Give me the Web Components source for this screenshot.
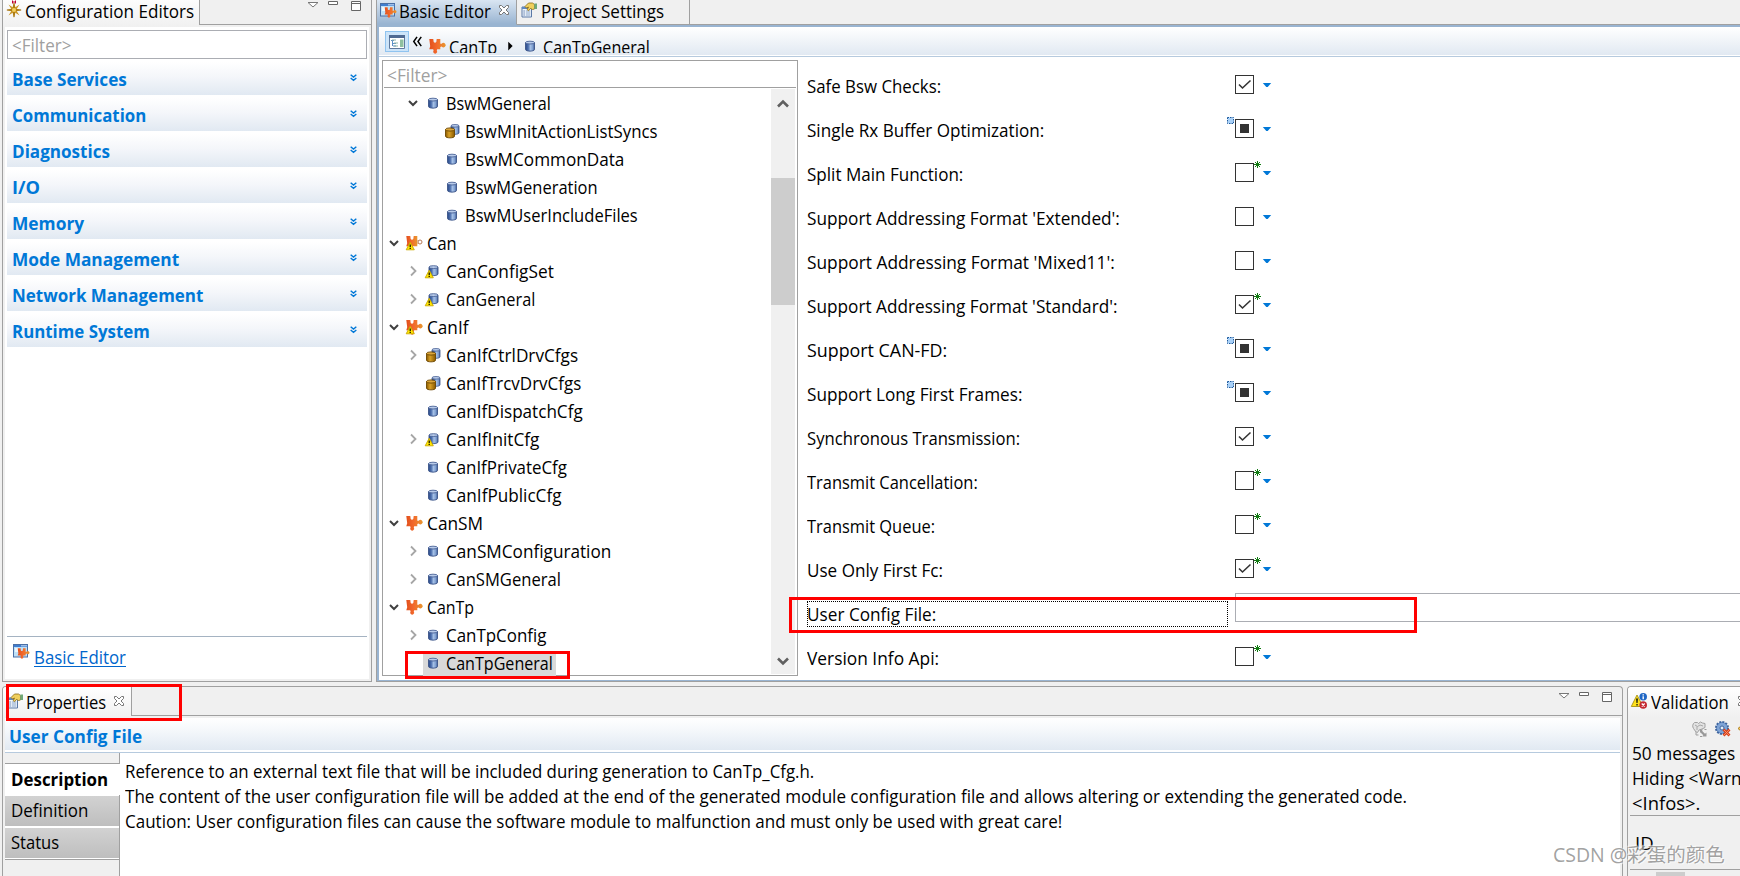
<!DOCTYPE html>
<html lang="en">
<head>
<meta charset="utf-8">
<title>Configurator</title>
<style>
    html, body {
        margin: 0;
        height: 876px;
        overflow: hidden;
    }
    body {
        background: #f0f0f0;
        color: #000;
        font: 17.6px/24px "Open Sans", "Noto Sans", "Noto Sans CJK SC", sans-serif;
    }
</style>
</head>
<body>
<config-app></config-app>

<script>
const PUZZLE = `<path d="M.3 1h4l.4 3c.8 1 1.800 1 2.600 0l.4-3h3.600v4.800h1.400a2.200 2.200 0 1 1 0 2.600l-1.400.6v2.200H8.200l-.4 1.200a2 2 0 1 1-3.200 0l-.4-1.200H.3l.9-3z" fill="url(#o)"/>`;
const ORANGE = `<defs><linearGradient id="o"><stop offset="0" stop-color="#e2501c"/><stop offset=".45" stop-color="#f2692c"/><stop offset="1" stop-color="#e8962e"/></linearGradient></defs>`;
const BLUE = `<defs><linearGradient id="b"><stop offset="0" stop-color="#2b4a87"/><stop offset=".3" stop-color="#4c6fae"/><stop offset=".55" stop-color="#a5c0e6"/><stop offset=".8" stop-color="#7f9fd0"/><stop offset="1" stop-color="#3d5a94"/></linearGradient><linearGradient id="g"><stop offset="0" stop-color="#8a5a00"/><stop offset=".4" stop-color="#d9a126"/><stop offset="1" stop-color="#8a5a00"/></linearGradient></defs>`;
const CYL = `<path d="M3.500 4.600v6.800c0 2.300 9 2.300 9 0V4.600z" fill="url(#b)" stroke="#3b5488" stroke-width=".9"/><ellipse cx="8" cy="4.600" rx="4.500" ry="1.400" fill="#b8cbea" stroke="#4a6296" stroke-width=".9"/>`;
const WARN = `<path d="M4.200 7.200 8.300 14.800H.2z" fill="#ffe600" stroke="#c9a800" stroke-width=".9"/><path d="M3.500 9.600h1.500v2.500H3.500zM3.500 12.800h1.500v1.200H3.500z" fill="#3a3000"/>`;

const ICONS = {
    puzzle: ORANGE + PUZZLE,
    puzzlewarn: ORANGE + PUZZLE + WARN,
    puzzleopen: ORANGE + `<path d="M.3 1h4l.4 3c.8 1 1.800 1 2.600 0l.4-3h3.600v10.200H.3l.9-3z" fill="url(#o)"/><path d="M11.500 5.800l1.300.2M11.500 8.200l1.300-.2" stroke="#c07848"/><circle cx="14" cy="7" r="2" fill="#fff" stroke="#b87a56"/>` + WARN,
    cyl: BLUE + CYL,
    cylwarn: BLUE + `<g transform="translate(.5 -.5)">${CYL}</g>` + WARN,
    cyls: BLUE + `<path d="M7 2.800v7c0 2 8 2 8 0v-7z" fill="url(#b)" stroke="#3b5488" stroke-width=".8"/><ellipse cx="11" cy="2.800" rx="4" ry="1.300" fill="#b8cbea" stroke="#4a6296" stroke-width=".8"/><path d="M1.500 6.500v6.700c0 2.200 9 2.200 9 0V6.500z" fill="url(#g)" stroke="#6b4600" stroke-width=".9"/><ellipse cx="6" cy="6.500" rx="4.500" ry="1.600" fill="#dca63a" stroke="#6b4600" stroke-width=".9"/>`,
    basic: ORANGE + `<rect x=".5" y="1.500" width="14" height="12.500" fill="#bfe0f7" stroke="#4a6fa5"/><path d="M1 2h13.500v2H1z" fill="#3f7ed0"/><path d="M8.500 2h1v1.500h-1zM10.500 2h1v1.500h-1zM12.500 2h1v1.500h-1z" fill="#fff"/><path d="M2 5h5v4H2z" fill="#e9f6ff"/><g transform="translate(4.500 4.500) scale(.72)">${PUZZLE}</g>`,
    props: `<path d="M1 5h9.500v10H1z" fill="#eef4fb" stroke="#5a78a6"/><path d="M1 5h9.500v2H1z" fill="#5f88c2"/><path d="M2.500 9h1.200M2.500 11h1.200M2.500 13h1.200" stroke="#3a5d9a"/><path d="M4.800 9h4.500M4.800 11h4.500M4.800 13h4.500" stroke="#8aa4c8"/><path d="M4 4.500 7.500 1h4l2 1.500V7l-2 .5-2-1-2 2.200-1.300-1L7.500 5 5.500 6z" fill="#f0cf5c" stroke="#8a6a16" stroke-width=".8"/><path d="M13.300 1.500H16V7h-2.700z" fill="#6fa878"/>`,
    star: `<g transform="translate(0 1)"><path d="M8 0 9.400 5.300 13.500 2.600 10.800 6.700 16 8l-5.200 1.300 2.700 4.100-4.100-2.700L8 16 6.600 10.700 2.500 13.400 5.200 9.300 0 8l5.200-1.300L2.500 2.600l4.100 2.700z" fill="#c89420"/><path d="M8 1v14M1 8h14" stroke="#8a5a00" stroke-width=".8"/><circle cx="8" cy="8" r="2" fill="#f4d060"/></g><path d="M6.500-.5v3M9.500-.5v3M6.500 1h3" stroke="#c00030"/>`,
    nav: `<path d="M.5 1.500h15v13H.5z" fill="#fff" stroke="#5f7a9e"/><path d="M0 1h16v3H0z" fill="#4f6a92"/><path d="M11 5.500h3.500V13H11z" fill="#8fc0a0"/><path d="M2 6.500h3M3.500 7v5M4 9.500h3M4 12h3" stroke="#5c90c8"/><path d="M5 9h4M5 12h4M3 6h4" stroke="#8fb6a8"/>`,
    validation: `<path d="M6 2 12 13.500H.3z" fill="#ffe119" stroke="#b09a20"/><path d="M5 5.500h2L6.600 10H5.400zM5.300 11h1.500v1.500H5.300z" fill="#2c2c10"/><circle cx="12.200" cy="3.800" r="3.800" fill="#1f66c4"/><path d="M12.200 1.200v1.300M12.200 3.300v3" stroke="#fff" stroke-width="1.400"/><circle cx="12.200" cy="12" r="3.800" fill="#c42a32"/><path d="m10.700 10.500 3 3m0-3-3 3" stroke="#fff" stroke-width="1.300"/>`,
    graybulb: `<g fill="#e2e2e2" stroke="#a0a0a0"><path d="M4 11 1.500 7.500C.2 5.500.500 3 2.500 1.500h3l1 1 2-1.500 2 1 2.500.5v4L10 8l-3 1-1.500 2.500z"/><path d="M4 11v3h2.500"/></g><path d="M3 4l2.500 1.500L8 4l3 1M5 5.500V9" stroke="#a8a8a8" fill="none"/><path d="M8 8.500h3l-1 1.200 3 3 1.500-1.200v4h-4.500l1.300-1.300-3-3L8 12.500z" fill="#999"/><path d="M8 15.500h2M14.500 8.500h-2" stroke="#999"/>`,
    gearx: `<circle cx="7" cy="7" r="6" fill="#6f97cc" stroke="#3f659f" stroke-width="2" stroke-dasharray="2 1.100"/><circle cx="7" cy="7" r="5" fill="#7fa4d6"/><circle cx="7" cy="7" r="2" fill="#e8f0fa" stroke="#3f659f"/><path d="m8.500 8.500 6 6m0-6-6 6" stroke="#d8401c" stroke-width="2.800"/><path d="m9 9 5 5m0-5-5 5" stroke="#ff9a70" stroke-width=".8"/>`,
    arrow: `<path d="M0 7.500 6 2.500v3.500h6v3.500H6v3z" fill="#f0c860" stroke="#b08020"/>`,
    close: `<path d="M3.500 3.500h2L8 6l2.500-2.500h2v2L10 8l2.500 2.500v2h-2L8 10l-2.500 2.500h-2v-2L6 8 3.500 5.500z" fill="#fff" stroke="#777"/>`,
    menu: `<path d="M3 3.500h10l-5 4.500z" fill="#fff" stroke="#777"/>`,
    min: `<path d="M3.500 2.500h9v3h-9z" fill="#fff" stroke="#666"/>`,
    max: `<path d="M3.500 2.500h9v9h-9zM3.500 4.500h9" fill="#fff" stroke="#666"/>`,
    more: `<path d="m4.500 4.500 3.500 3 3.500-3M4.500 8.500l3.500 3 3.500-3" fill="none" stroke="#0078d7" stroke-width="1.700"/>`,
    back: `<path d="M7.500 3 4 8l3.500 5M12 3 8.500 8l3.500 5" fill="none" stroke="#000" stroke-width="1.600"/>`,
    next: `<path d="M6 3l5 5-5 5z" fill="#000"/>`,
    open: `<path d="m4 6 4 4 4-4" fill="none" stroke="#404040" stroke-width="2"/>`,
    shut: `<path d="m6 3.500 4.500 4.500L6 12.500" fill="none" stroke="#a6a6a6" stroke-width="1.800"/>`,
    up: `<path d="m3 10.500 5-5 5 5" fill="none" stroke="#606060" stroke-width="2.600"/>`,
    down: `<path d="m3 5.500 5 5 5-5" fill="none" stroke="#606060" stroke-width="2.600"/>`,
};

class UiIcon extends HTMLElement {
    connectedCallback() {
        const size = this.getAttribute("size") || 16;
        this.attachShadow({ mode: "open" }).innerHTML = `
            <style>
                :host { display: block; flex: none; width: ${size}px; height: ${size}px; }
                svg { display: block; overflow: visible; }
            </style>
            <svg width="${size}" height="${size}" viewBox="0 0 16 16">${ICONS[this.getAttribute("name")] || ""}</svg>`;
    }
}

// A single line of text, condensed horizontally to the width in "w".
class FitText extends HTMLElement {
    connectedCallback() {
        const w = Number(this.getAttribute("w"));
        this.attachShadow({ mode: "open" }).innerHTML = `
            <style>
                :host { display: block; flex: none; width: ${w}px; white-space: nowrap; }
                span { display: inline-block; margin-left: -1px; transform-origin: 0 50%; }
                :host([link]) span { text-decoration: underline; text-underline-offset: 2px; }
            </style>
            <span><slot></slot></span>`;
        const span = this.shadowRoot.querySelector("span");
        span.style.transform = `scaleX(${w / span.offsetWidth})`;
    }
}

class ViewTools extends HTMLElement {
    connectedCallback() {
        this.attachShadow({ mode: "open" }).innerHTML = `
            <style>
                :host { display: flex; margin-left: auto; }
                ui-icon:last-child { margin-left: 3px; }
            </style>
            <ui-icon name="menu"></ui-icon>
            <ui-icon name="min" style="margin:0 4px"></ui-icon>
            <ui-icon name="max"></ui-icon>`;
    }
}

class EditorGroup extends HTMLElement {
    connectedCallback() {
        this.attachShadow({ mode: "open" }).innerHTML = `
            <style>
                :host {
                    display: flex; box-sizing: border-box; height: 33px; margin-bottom: 3px;
                    padding: 0 9px 0 5.500px; align-items: center;
                    background: linear-gradient(#fff, #f4f6fa 45%, #e1e9f2);
                    color: #0078d7; font-weight: 700;
                }
                ui-icon { margin: 0 0 0 auto; width: 11px; height: 16px; }
            </style>
            <fit-text w="${this.getAttribute("w")}"><slot></slot></fit-text>
            <ui-icon name="more" size="13"></ui-icon>`;
    }
}

class EditorsPane extends HTMLElement {
    connectedCallback() {
        const groups = [["Base Services", 115], ["Communication", 134], ["Diagnostics", 98], ["I/O", 28],
            ["Memory", 72], ["Mode Management", 167], ["Network Management", 191], ["Runtime System", 138]];
        this.attachShadow({ mode: "open" }).innerHTML = `
            <style>
                :host {
                    display: flex; flex-direction: column; box-sizing: border-box;
                    width: 370px; height: 682px; margin-left: 2px;
                    border: solid #a0a0a0; border-width: 0 1px 1px;
                }
                header { display: flex; height: 27px; }
                .tab {
                    display: flex; box-sizing: border-box; width: 196px; height: 27px; padding-left: 3px; gap: 4px;
                    background: linear-gradient(#fdfdfd, #f0f0f0);
                }
                .tab ui-icon { margin-top: 1px; }
                .tab fit-text { margin-top: -1px; }
                .rest {
                    display: flex; flex: 1; box-sizing: border-box; height: 25px; padding-right: 7px;
                    border: solid #a0a0a0; border-width: 0 0 1px 1px;
                }
                main { display: flex; flex-direction: column; flex: 1; margin: 0 2px 2px; padding: 3px 2px 0; background: #fff; }
                .filter { height: 27px; border: 1px solid #abadb3; padding-left: 5px; line-height: 28px; color: #a0a0a0; margin-bottom: 3px; }
                footer { display: flex; height: 42px; margin-top: auto; border-top: 1px solid #a5b3c2; padding-left: 6px; gap: 6px; }
                footer ui-icon { margin-top: 6px; }
                footer fit-text { margin-top: 8px; color: #0066cc; }
            </style>
            <header>
                <div class="tab"><ui-icon name="star"></ui-icon><fit-text w="169">Configuration Editors</fit-text></div>
                <div class="rest"><view-tools style="margin-top:-1px"></view-tools></div>
            </header>
            <main>
                <div class="filter"><fit-text w="59">&lt;Filter&gt;</fit-text></div>
                ${groups.map(([name, w]) => `<editor-group w="${w}">${name}</editor-group>`).join("")}
                <footer><ui-icon name="basic"></ui-icon><fit-text link w="92">Basic Editor</fit-text></footer>
            </main>`;
    }
}

class TreeNode extends HTMLElement {
    connectedCallback() {
        const level = Number(this.getAttribute("level"));
        const state = this.getAttribute("state");
        this.attachShadow({ mode: "open" }).innerHTML = `
            <style>
                :host { display: flex; height: 28px; align-items: center; padding-left: ${3 + 19 * level}px; }
                ui-icon, fit-text { margin-top: -2px; }
                .label { display: flex; align-items: center; height: 25px; margin-left: 2px; padding: 0 2px; gap: 6px; }
                :host([selected]) .label { background: #d9d9d9; }
            </style>
            <ui-icon name="${state}"></ui-icon>
            <div class="label">
                <ui-icon name="${this.getAttribute("icon")}"></ui-icon>
                <fit-text w="${this.getAttribute("w")}"><slot></slot></fit-text>
            </div>`;
    }
}

class ConfigTree extends HTMLElement {
    connectedCallback() {
        const nodes = [
            [1, "open", "cyl", "BswMGeneral", 105],
            [2, "", "cyls", "BswMInitActionListSyncs", 193],
            [2, "", "cyl", "BswMCommonData", 159],
            [2, "", "cyl", "BswMGeneration", 133],
            [2, "", "cyl", "BswMUserIncludeFiles", 173],
            [0, "open", "puzzleopen", "Can", 30],
            [1, "shut", "cylwarn", "CanConfigSet", 108],
            [1, "shut", "cylwarn", "CanGeneral", 89],
            [0, "open", "puzzlewarn", "CanIf", 41],
            [1, "shut", "cyls", "CanIfCtrlDrvCfgs", 132],
            [1, "", "cyls", "CanIfTrcvDrvCfgs", 135],
            [1, "", "cyl", "CanIfDispatchCfg", 137],
            [1, "shut", "cylwarn", "CanIfInitCfg", 93],
            [1, "", "cyl", "CanIfPrivateCfg", 121],
            [1, "", "cyl", "CanIfPublicCfg", 115],
            [0, "open", "puzzle", "CanSM", 56],
            [1, "shut", "cyl", "CanSMConfiguration", 165],
            [1, "shut", "cyl", "CanSMGeneral", 115],
            [0, "open", "puzzle", "CanTp", 47],
            [1, "shut", "cyl", "CanTpConfig", 100],
            [1, "", "cyl", "CanTpGeneral", 107, "selected"],
        ];
        this.attachShadow({ mode: "open" }).innerHTML = `
            <style>
                :host {
                    display: flex; flex-direction: column; box-sizing: border-box; flex: none;
                    width: 416px; height: 616px; border: 1px solid #a0a0a0; background: #fff;
                }
                .filter { box-sizing: border-box; height: 27px; margin: 0 1px; padding: 2px 0 0 4px; border-bottom: 1px solid #a0a0a0; color: #a0a0a0; }
                .body { display: flex; height: 586px; margin-top: 1px; }
                .nodes { flex: 1; padding-top: 1px; }
                .bar { display: flex; flex-direction: column; align-items: center; box-sizing: border-box; width: 24px; height: 585px; margin-right: 2px; padding: 7px 0 5px; background: #f0f0f0; }
                .thumb { width: 24px; height: 127px; margin: 66px 0 auto; background: #cdcdcd; }
            </style>
            <div class="filter"><fit-text w="60">&lt;Filter&gt;</fit-text></div>
            <div class="body">
                <div class="nodes">
                    ${nodes.map(([level, state, icon, name, w, sel = ""]) =>
                        `<tree-node level="${level}" state="${state}" icon="${icon}" w="${w}" ${sel}>${name}</tree-node>`).join("")}
                </div>
                <div class="bar"><ui-icon name="up"></ui-icon><div class="thumb"></div><ui-icon name="down"></ui-icon></div>
            </div>`;
    }
}

class CheckField extends HTMLElement {
    connectedCallback() {
        const state = this.getAttribute("state");
        const mark = this.getAttribute("mark");
        const inner = {
            on: `<path d="M4 9.500l3.500 3.500L15.500 5.500" fill="none" stroke="#333" stroke-width="1.600"/>`,
            mixed: `<path d="M5 5h9v9H5z" fill="#333"/>`,
            off: "",
        }[state];
        const marks = {
            star: `<g transform="translate(22.500 1.500)" stroke="#127a12"><path d="M-3.500 0h7M0-3.500v7M-2.500-2.500l5 5M2.500-2.500l-5 5"/></g>`,
            inst: `<rect x="-7.500" y="-1.500" width="6" height="6" fill="#a8d0f8" stroke="#1c5a9e" stroke-dasharray="1.500 1"/>`,
        };
        const control = state === "text"
            ? `<div class="input"></div>`
            : `<svg width="38" height="20"><rect x=".5" y=".5" width="18" height="18" fill="#fff" stroke="#333"/>${inner}${marks[mark] || ""}<path d="M27.800 8h8.400l-3.500 4h-1.400z" fill="#0078d7"/></svg>`;
        this.attachShadow({ mode: "open" }).innerHTML = `
            <style>
                :host { display: flex; height: 44px; }
                .label { box-sizing: border-box; width: 421px; height: 26px; margin: 9px 7px 0 0; padding: 1px 0 0 1px; }
                :host([focused]) .label { border: 1px dotted #000; padding: 0; }
                svg { display: block; margin-top: 11px; overflow: visible; }
                .input { flex: 1; height: 27px; border: 1px solid #abadb3; border-right: 0; background: #fff; margin-top: 1px; }
            </style>
            <div class="label"><fit-text w="${this.getAttribute("w")}"><slot></slot></fit-text></div>
            ${control}`;
    }
}

class EditorPane extends HTMLElement {
    connectedCallback() {
        const fields = [
            ["Safe Bsw Checks:", 134, "on"],
            ["Single Rx Buffer Optimization:", 237, "mixed", "inst"],
            ["Split Main Function:", 156, "off", "star"],
            ["Support Addressing Format 'Extended':", 313, "off"],
            ["Support Addressing Format 'Mixed11':", 308, "off"],
            ["Support Addressing Format 'Standard':", 311, "on", "star"],
            ["Support CAN-FD:", 140, "mixed", "inst"],
            ["Support Long First Frames:", 215, "mixed", "inst"],
            ["Synchronous Transmission:", 213, "on"],
            ["Transmit Cancellation:", 171, "off", "star"],
            ["Transmit Queue:", 128, "off", "star"],
            ["Use Only First Fc:", 136, "on", "star"],
            ["User Config File:", 129, "text", "", "focused"],
            ["Version Info Api:", 132, "off", "star"],
        ];
        this.attachShadow({ mode: "open" }).innerHTML = `
            <style>
                :host {
                    display: flex; flex-direction: column; box-sizing: border-box; flex: 1; height: 682px; margin-left: 4px;
                    border-left: 1px solid #a0a0a0; border-bottom: 1px solid #a0a0a0; overflow: hidden;
                }
                header { display: flex; height: 25px; flex: none; }
                .tab { display: flex; box-sizing: border-box; height: 25px; gap: 4px; border: solid #a0a0a0; border-width: 0 1px 1px 0; }
                .tab ui-icon { margin-top: 2px; }
                .tab fit-text { margin-top: -1px; }
                .active { width: 140px; padding-left: 3px; background: linear-gradient(#d9e5f2, #99b4d1); border-bottom-color: #99b4d1; }
                .second { width: 173px; padding-left: 4px; gap: 5px; }
                .rest { flex: 1; border-bottom: 1px solid #a0a0a0; box-sizing: border-box; }
                .frame { display: flex; flex-direction: column; flex: 1; border: 2px solid #99b4d1; border-right: 0; background: #fff; }
                .crumbs { display: flex; height: 28px; background: linear-gradient(#fff, #e1e9f2); border-bottom: 1px solid #fff; box-shadow: 0 1px #b6cade; padding-left: 6px; }
                .toggle { width: 16px; height: 15px; padding: 2px 3px; margin: 4px 2px 0 0; background: #cce4f9; border: 1px solid #90c4f0; flex: none; }
                .crumbs > ui-icon { margin-top: 11px; }
                .clip { height: 18px; margin-top: 8px; overflow: hidden; line-height: 25px; padding-left: 1px; }
                .content { display: flex; flex: 1; padding: 4px 0 0 3px; }
                .form { flex: 1; padding: 4px 0 0 9px; }
            </style>
            <header>
                <div class="tab active"><ui-icon name="basic"></ui-icon><fit-text w="92">Basic Editor</fit-text><ui-icon name="close"></ui-icon></div>
                <div class="tab second"><ui-icon name="props"></ui-icon><fit-text w="123">Project Settings</fit-text></div>
                <div class="rest"></div>
            </header>
            <div class="frame">
                <div class="crumbs">
                    <div class="toggle"><ui-icon name="nav"></ui-icon></div>
                    <ui-icon name="back" style="margin:7px 4px 0 -1px" size="15"></ui-icon>
                    <ui-icon name="puzzle" style="margin-right:4px"></ui-icon>
                    <div class="clip"><fit-text w="48">CanTp</fit-text></div>
                    <ui-icon name="next" style="margin:12px 10px 0 5px" size="14"></ui-icon>
                    <ui-icon name="cyl" style="margin:11px 5px 0 -5px"></ui-icon>
                    <div class="clip"><fit-text w="107">CanTpGeneral</fit-text></div>
                </div>
                <div class="content">
                    <config-tree></config-tree>
                    <div class="form">
                        ${fields.map(([label, w, state, mark = "", focused = ""]) =>
                            `<check-field w="${w}" state="${state}" mark="${mark}" ${focused}>${label}</check-field>`).join("")}
                    </div>
                </div>
            </div>`;
    }
}

class PropertiesPane extends HTMLElement {
    connectedCallback() {
        this.attachShadow({ mode: "open" }).innerHTML = `
            <style>
                :host {
                    display: flex; flex-direction: column; box-sizing: border-box; width: 1621px; height: 190px; margin-left: 2px;
                    border: 1px solid #a0a0a0; border-bottom: 0; border-radius: 4px 4px 0 0; overflow: hidden;
                }
                header { display: flex; height: 31px; flex: none; }
                .tab { display: flex; box-sizing: border-box; width: 128px; padding: 3px 0 0 4px; gap: 4px; background: linear-gradient(#fff, #f0f0f0); }
                .tab ui-icon { margin-top: 3px; }
                .rest { display: flex; flex: 1; box-sizing: border-box; height: 29px; padding: 3px 7px 0 0; border: solid #a0a0a0; border-width: 0 0 1px 1px; }
                .title { box-sizing: border-box; flex: none; height: 35px; margin: 0 2px; padding: 6px 0 0 4.500px; color: #0078d7; font-weight: 700;
                    background: linear-gradient(#fff, #f5f8fb 35%, #e1e9f2 94%, #fff 94%); border-bottom: 1px solid #b6cade; }
                .body { display: flex; flex: 1; margin: 0 2px; background: #fff; }
                nav { box-sizing: border-box; width: 115px; background: #f0f0f0; border-right: 1px solid #a0a0a0; padding-top: 10px; }
                .item { box-sizing: border-box; height: 32px; padding: 2px 0 0 7px; border: solid #fff; border-width: 1px 0;
                    box-shadow: 0 1px #a0a0a0; background: linear-gradient(#d2d2d2, #bebebe); }
                .item.on { margin-right: -1px; background: #fff; border: 0; border-top: 1px solid #a0a0a0; padding-top: 3px; font-weight: 700; }
                .text { padding: 6px 0 0 6px; line-height: 25px; }
            </style>
            <header>
                <div class="tab"><ui-icon name="props"></ui-icon><fit-text w="80">Properties</fit-text><ui-icon name="close"></ui-icon></div>
                <div class="rest"><view-tools></view-tools></div>
            </header>
            <div class="title"><fit-text w="133">User Config File</fit-text></div>
            <div class="body">
                <nav>
                    <div class="item on"><fit-text w="97">Description</fit-text></div>
                    <div class="item"><fit-text w="77">Definition</fit-text></div>
                    <div class="item"><fit-text w="48">Status</fit-text></div>
                </nav>
                <div class="text">
                    <fit-text w="689">Reference to an external text file that will be included during generation to CanTp_Cfg.h.</fit-text>
                    <fit-text w="1282">The content of the user configuration file will be added at the end of the generated module configuration file and allows altering or extending the generated code.</fit-text>
                    <fit-text w="937">Caution: User configuration files can cause the software module to malfunction and must only be used with great care!</fit-text>
                </div>
            </div>`;
    }
}

class ValidationPane extends HTMLElement {
    connectedCallback() {
        this.attachShadow({ mode: "open" }).innerHTML = `
            <style>
                :host {
                    display: flex; flex-direction: column; box-sizing: border-box; flex: 1; height: 190px; margin-left: 4px;
                    border: solid #a0a0a0; border-width: 1px 0 0 1px; border-radius: 4px 0 0 0; overflow: hidden;
                }
                header, .tools, .text, .head { box-sizing: border-box; flex: none; }
                header { display: flex; height: 31px; padding: 3px 0 0 3px; gap: 5px; background: linear-gradient(#fff, #f0f0f0); }
                header ui-icon { margin-top: 3px; }
                .tools { display: flex; height: 20px; padding: 3px 0 0 64px; gap: 7px; }
                .text { height: 77px; padding: 3px 0 0 5px; line-height: 25px; }
                .head { height: 55px; margin-left: 2px; padding: 15px 0 0 6px; border: solid #a0a0a0; border-width: 1px 0; }
                .thumb { width: 29px; height: 6px; margin: 2px 0 0 28px; background: #cdcdcd; }
            </style>
            <header><ui-icon name="validation"></ui-icon><fit-text w="78">Validation</fit-text><ui-icon name="close"></ui-icon></header>
            <div class="tools"><ui-icon name="graybulb"></ui-icon><ui-icon name="gearx"></ui-icon><ui-icon name="arrow"></ui-icon></div>
            <div class="text">
                <fit-text w="103">50 messages</fit-text>
                <fit-text w="110">Hiding &lt;Warn</fit-text>
                <fit-text w="68">&lt;Infos&gt;.</fit-text>
            </div>
            <div class="head"><fit-text w="19">ID</fit-text></div>
            <div class="thumb"></div>`;
    }
}

// Red rectangle laid over the window to point at one item.
class CalloutBox extends HTMLElement {
    connectedCallback() {
        const [x, y, w, h] = this.getAttribute("box").split(" ");
        this.attachShadow({ mode: "open" }).innerHTML = `
            <style>
                :host {
                    display: block; position: absolute; box-sizing: border-box; border: 3px solid #f00;
                    left: ${x}px; top: ${y}px; width: ${w}px; height: ${h}px;
                }
            </style>`;
    }
}

class ConfigApp extends HTMLElement {
    connectedCallback() {
        this.attachShadow({ mode: "open" }).innerHTML = `
            <style>
                :host { display: flex; flex-direction: column; position: relative; gap: 4px; width: 1740px; height: 876px; overflow: hidden; }
                .row { display: flex; }
                .mark { position: absolute; left: 1554px; top: 843px; font-size: 19.500px; color: rgba(150, 150, 150, .9); text-shadow: 1px 1px 1px rgba(255, 255, 255, .7), -1px -1px 1px rgba(255, 255, 255, .7); }
            </style>
            <div class="row"><editors-pane></editors-pane><editor-pane></editor-pane></div>
            <div class="row"><properties-pane></properties-pane><validation-pane></validation-pane></div>
            <callout-box box="405 651 165 28"></callout-box>
            <callout-box box="789 597 628 36"></callout-box>
            <callout-box box="6 684 176 37"></callout-box>
            <div class="mark"><fit-text w="172">CSDN @彩蛋的颜色</fit-text></div>`;
    }
}

customElements.define("ui-icon", UiIcon);
customElements.define("fit-text", FitText);
customElements.define("view-tools", ViewTools);
customElements.define("editor-group", EditorGroup);
customElements.define("editors-pane", EditorsPane);
customElements.define("tree-node", TreeNode);
customElements.define("config-tree", ConfigTree);
customElements.define("check-field", CheckField);
customElements.define("editor-pane", EditorPane);
customElements.define("properties-pane", PropertiesPane);
customElements.define("validation-pane", ValidationPane);
customElements.define("callout-box", CalloutBox);
customElements.define("config-app", ConfigApp);
</script>
</body>
</html>
